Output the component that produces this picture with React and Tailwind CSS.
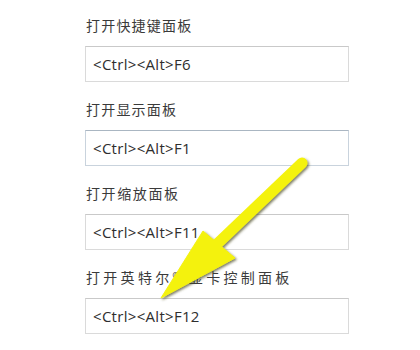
import React from "react";

const groups = [
  { label: "打开快捷键面板", value: "<Ctrl><Alt>F6", box: "border-[#dadada] border-t-[#c9c9c9]", track: "tracking-[1.2px]" },
  { label: "打开显示面板", value: "<Ctrl><Alt>F1", box: "border-[#c9d3dd] border-t-[#aab6c2]", track: "tracking-[1.2px]" },
  { label: "打开缩放面板", value: "<Ctrl><Alt>F11", box: "border-[#dadada] border-t-[#c9c9c9]", track: "tracking-[1.6px]" },
  { label: "打开英特尔® 显卡控制面板", value: "<Ctrl><Alt>F12", box: "border-[#dadada] border-t-[#c9c9c9]", track: "tracking-[3.3px]" },
];

function Arrow() {
  return (
    <svg className="absolute left-0 top-0 pointer-events-none" width="420" height="350" viewBox="0 0 420 350">
      <defs>
        <filter id="sh" x="-20%" y="-20%" width="140%" height="140%">
          <feDropShadow dx="1.5" dy="1.5" stdDeviation="1.2" floodColor="#4a4a20" floodOpacity="0.7" />
        </filter>
      </defs>
      <g filter="url(#sh)">
        <line x1="302" y1="163" x2="216" y2="245" stroke="#f4f20c" strokeWidth="11" strokeLinecap="round" />
        <polygon points="203,231 161,298 235,258" fill="#f4f20c" stroke="#f4f20c" strokeWidth="1" strokeLinejoin="round" />
      </g>
    </svg>
  );
}

export default function App() {
  return (
    <div className="relative w-[420px] h-[350px] bg-white overflow-hidden">
      <div className="flex flex-col pl-[85px] pt-[15px]">
        {groups.map((g, i) => (
          <div key={i} className="flex flex-col pb-[17px]">
            <div
              className={`h-[20px] leading-[20px] text-[14px] text-[#3a3a3a] pl-px ${g.track}`}
              style={{ fontFamily: '"Noto Sans CJK SC", "Noto Sans", sans-serif' }}
            >
              {g.label}
            </div>
            <div
              className={`mt-[11px] w-[264px] h-[36px] border ${g.box} flex items-center pl-[7px] text-[15px] tracking-[0.3px] text-[#2e2e2e]`}
              style={{ fontFamily: '"Open Sans", "Noto Sans", sans-serif' }}
            >
              {g.value}
            </div>
          </div>
        ))}
      </div>
      <Arrow />
    </div>
  );
}
